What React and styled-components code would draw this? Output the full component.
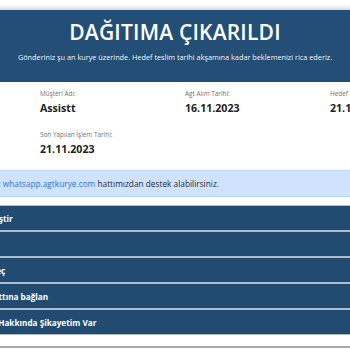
import React from 'react';
import styled, { createGlobalStyle } from 'styled-components';

const GlobalStyle = createGlobalStyle`
  html, body {
    margin: 0;
    padding: 0;
    background: #ffffff;
    overflow: hidden;
  }
  body {
    font-family: "Open Sans", "Noto Sans", Arial, sans-serif;
  }
`;

const Page = styled.div`
  width: 350px;
  height: 350px;
  overflow: hidden;
  background: #ffffff;
  padding-top: 10px;
  box-sizing: border-box;
`;

const Container = styled.div`
  width: 750px;
  margin-left: -200px;
`;

const Header = styled.header`
  background: #234e75;
  color: #ffffff;
  text-align: center;
  height: 72px;
  box-sizing: border-box;
  padding-top: 8px;
  box-shadow: 0 -2px 4px rgba(60, 80, 110, 0.25);
`;

const Title = styled.h1`
  margin: 0;
  font-size: 21px;
  font-weight: 600;
  line-height: 28px;
  letter-spacing: 0.2px;
`;

const Subtitle = styled.p`
  margin: 6px 0 0;
  font-size: 7.3px;
  line-height: 10px;
  opacity: 0.95;
`;

const InfoGrid = styled.div`
  display: grid;
  grid-template-columns: repeat(3, 145px);
  row-gap: 15px;
  padding: 7px 0 0 240px;
`;

const InfoItem = styled.div`
  display: flex;
  flex-direction: column;
  gap: 3px;
`;

const Label = styled.span`
  font-size: 6.4px;
  line-height: 9px;
  color: #6f6f6f;
`;

const Value = styled.span`
  font-size: 10.6px;
  line-height: 14px;
  font-weight: 700;
  color: #222222;
`;

const Alert = styled.div`
  margin-top: 14px;
  height: 27px;
  box-sizing: border-box;
  background: #cfe2ff;
  border: 1px solid #bcd6fb;
  display: flex;
  align-items: center;
  padding-left: 94px;
  font-size: 8.3px;
  color: #1f2b38;
  white-space: nowrap;
`;

const Link = styled.a`
  color: #2f72d6;
  text-decoration: none;
`;

const ActionList = styled.div`
  margin-top: 8px;
  display: flex;
  flex-direction: column;
  gap: 2px;
  background: #aebccb;
  border-top: 1px solid #aebccb;
  border-bottom: 1px solid #aebccb;
`;

const ActionButton = styled.button`
  display: block;
  width: 100%;
  height: 24px;
  border: none;
  background: #224b71;
  color: #ffffff;
  font-family: inherit;
  font-size: 8.2px;
  font-weight: 700;
  text-align: left;
  padding: 0 0 0 172px;
  cursor: pointer;
  white-space: nowrap;
`;

const Footer = styled.div`
  margin-top: 11px;
  border-bottom: 2px solid #a8a8a8;
`;

const info = [
  { label: 'Müşteri Adı:', value: 'Assistt' },
  { label: 'Agt Alım Tarihi:', value: '16.11.2023' },
  { label: 'Hedef Teslim Tarihi:', value: '21.11.2023' },
  { label: 'Son Yapılan İşlem Tarihi:', value: '21.11.2023' },
];

const actions = [
  'İli değiştir',
  'İptal',
  'Saat seç',
  'Eve hattına bağlan',
  'Kurye Hakkında Şikayetim Var',
];

export default function App() {
  return (
    <>
      <GlobalStyle />
      <Page>
        <Container>
          <Header>
            <Title>DAĞITIMA ÇIKARILDI</Title>
            <Subtitle>
              Gönderiniz şu an kurye üzerinde. Hedef teslim tarihi akşamına kadar beklemenizi rica ederiz.
            </Subtitle>
          </Header>

          <InfoGrid>
            {info.map((item) => (
              <InfoItem key={item.label}>
                <Label>{item.label}</Label>
                <Value>{item.value}</Value>
              </InfoItem>
            ))}
          </InfoGrid>

          <Alert>
            <span>
              Her türlü sorunuz için 7/24: <Link href="#">whatsapp.agtkurye.com</Link> hattımızdan destek alabilirsiniz.
            </span>
          </Alert>

          <ActionList>
            {actions.map((text) => (
              <ActionButton key={text}>{text}</ActionButton>
            ))}
          </ActionList>

          <Footer />
        </Container>
      </Page>
    </>
  );
}
